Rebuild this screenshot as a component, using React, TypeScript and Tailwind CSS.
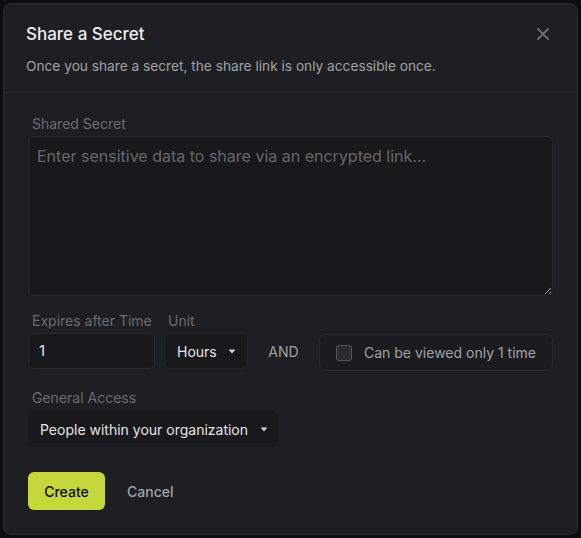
import React from 'react';

const Caret = () => (
  <svg width="8" height="5" viewBox="0 0 8 5" className="shrink-0">
    <path d="M0.5 0.5h7L4 4.5z" fill="#d4d4d8" />
  </svg>
);

export default function App() {
  return (
    <div
      className="w-[581px] h-[538px] bg-[#0c0d0f] p-[3px]"
      style={{ fontFamily: 'Inter, "Noto Sans", sans-serif' }}
    >
      <div className="h-full rounded-lg border border-[#2a2b2e] bg-[#1e1f22] flex flex-col">
        <div className="px-[22px] pt-[18px] pb-[16px] border-b border-[#27282b] relative">
          <h2 className="text-[17px] leading-6 font-medium text-[#ececee]">Share a Secret</h2>
          <p className="mt-[10px] text-[13.7px] leading-5 text-[#a1a1a6]">
            Once you share a secret, the share link is only accessible once.
          </p>
          <button className="absolute right-[28px] top-[24px] text-[#6e6e73]">
            <svg width="12" height="12" viewBox="0 0 12 12">
              <path d="M1 1l10 10M11 1L1 11" stroke="currentColor" strokeWidth="1.8" strokeLinecap="round" />
            </svg>
          </button>
        </div>

        <div className="px-6 pt-[21px] flex flex-col">
          <label className="pl-1 text-[14px] leading-5 text-[#6b6b70]">Shared Secret</label>
          <textarea
            className="mt-[2px] h-[160px] w-full rounded-md border border-[#2a2b2e] bg-[#19191b] px-2 py-[7px] text-[16px] leading-6 text-[#e4e4e7] placeholder:text-[#66666b] outline-none"
            placeholder="Enter sensitive data to share via an encrypted link..."
          />

          <div className="mt-[15px] flex items-end">
            <div className="flex flex-col w-[127px]">
              <label className="pl-1 text-[14px] leading-5 text-[#6b6b70]">Expires after Time</label>
              <div className="mt-[2px] h-9 rounded-md border border-[#2a2b2e] bg-[#19191b] px-[10px] flex items-center text-[15px] text-[#e4e4e7]">
                1
              </div>
            </div>
            <div className="ml-[9px] flex flex-col w-[84px]">
              <label className="pl-1 text-[14px] leading-5 text-[#6b6b70]">Unit</label>
              <div className="mt-[2px] h-9 rounded-md border border-[#252629] bg-[#19191b] pl-[12px] flex items-center gap-[11px] text-[14px] text-[#e4e4e7]">
                Hours
                <Caret />
              </div>
            </div>
            <div className="w-[71px] h-9 flex items-center justify-center text-[14px] text-[#a1a1a6]">AND</div>
            <div className="flex-1 h-[37px] rounded-md border border-[#2a2b2e] bg-[#1b1c1f] flex items-center pl-4 -mb-[2px]">
              <span className="w-4 h-4 rounded-[3px] border border-[#55565b] bg-[#2a2b2e]" />
              <span className="ml-[12px] text-[14px] text-[#a1a1a6]">Can be viewed only 1 time</span>
            </div>
          </div>

          <label className="mt-[19px] pl-1 text-[14px] leading-5 text-[#6b6b70]">General Access</label>
          <div className="mt-[3px] h-9 w-[250px] rounded-md bg-[#19191b] pl-3 flex items-center gap-[12px] whitespace-nowrap text-[14px] text-[#e4e4e7]">
            People within your organization
            <Caret />
          </div>

          <div className="mt-[25px] flex items-center">
            <button className="h-[38px] w-[77px] rounded-md bg-[#c6d73b] text-[14px] font-medium text-[#0d0d0d]">
              Create
            </button>
            <button className="ml-[22px] text-[14px] font-medium text-[#a1a1a6]">Cancel</button>
          </div>
        </div>
      </div>
    </div>
  );
}
